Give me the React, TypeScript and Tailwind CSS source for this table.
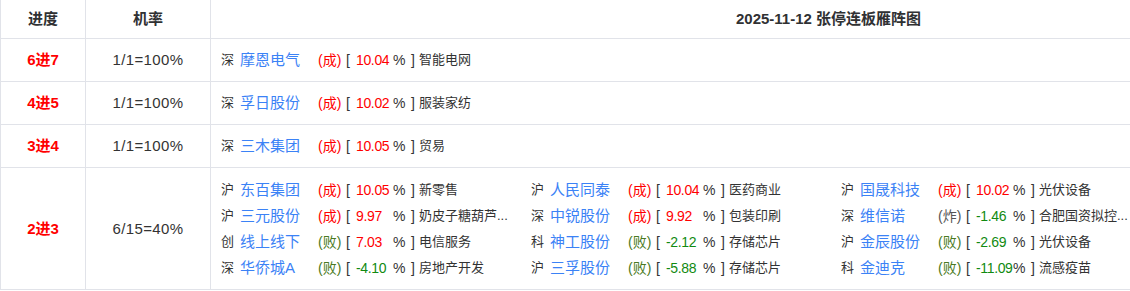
import React from 'react';

type Stock = {
  mkt: string;
  name: string;
  tag: '成' | '败' | '炸';
  pct: string;
  ind: string;
};

type Row = { level: string; rate: string; stocks: Stock[] };

const ROWS: Row[] = [
  { level: '6进7', rate: '1/1=100%', stocks: [{ mkt: '深', name: '摩恩电气', tag: '成', pct: '10.04', ind: '智能电网' }] },
  { level: '4进5', rate: '1/1=100%', stocks: [{ mkt: '深', name: '孚日股份', tag: '成', pct: '10.02', ind: '服装家纺' }] },
  { level: '3进4', rate: '1/1=100%', stocks: [{ mkt: '深', name: '三木集团', tag: '成', pct: '10.05', ind: '贸易' }] },
  {
    level: '2进3',
    rate: '6/15=40%',
    stocks: [
      { mkt: '沪', name: '东百集团', tag: '成', pct: '10.05', ind: '新零售' },
      { mkt: '沪', name: '人民同泰', tag: '成', pct: '10.04', ind: '医药商业' },
      { mkt: '沪', name: '国晟科技', tag: '成', pct: '10.02', ind: '光伏设备' },
      { mkt: '沪', name: '三元股份', tag: '成', pct: '9.97', ind: '奶皮子糖葫芦...' },
      { mkt: '深', name: '中锐股份', tag: '成', pct: '9.92', ind: '包装印刷' },
      { mkt: '深', name: '维信诺', tag: '炸', pct: '-1.46', ind: '合肥国资拟控...' },
      { mkt: '创', name: '线上线下', tag: '败', pct: '7.03', ind: '电信服务' },
      { mkt: '科', name: '神工股份', tag: '败', pct: '-2.12', ind: '存储芯片' },
      { mkt: '沪', name: '金辰股份', tag: '败', pct: '-2.69', ind: '光伏设备' },
      { mkt: '深', name: '华侨城A', tag: '败', pct: '-4.10', ind: '房地产开发' },
      { mkt: '沪', name: '三孚股份', tag: '败', pct: '-5.88', ind: '存储芯片' },
      { mkt: '科', name: '金迪克', tag: '败', pct: '-11.09', ind: '流感疫苗' },
    ],
  },
];

const tagColor = { 成: 'text-[#ff0000]', 败: 'text-[#4a7a22]', 炸: 'text-[#555555]' };

const StockItem = ({ s }: { s: Stock }) => (
  <div className="flex w-[310px] items-center h-[26px] whitespace-nowrap text-[#333]">
    <span className="w-[19px] text-[13px]">{s.mkt}</span>
    <span className="w-[78px] text-[15px] text-[#3b82f6]">{s.name}</span>
    <span className={`w-[28px] text-[14px] ${tagColor[s.tag]}`}>({s.tag})</span>
    <span className="w-[10px] text-[14px]">[</span>
    <span className={`w-[37px] text-[14px] tracking-tight ${s.pct.startsWith('-') ? 'text-[#118a11]' : 'text-[#ff0000]'}`}>{s.pct}</span>
    <span className="w-[18px] text-[14px]">%</span>
    <span className="w-[8px] text-[14px]">]</span>
    <span className="text-[13px]">{s.ind}</span>
  </div>
);

export default function App() {
  const cell = 'border-r border-b border-[#e1e3e9] flex items-center justify-center';
  return (
    <div className="w-[1130px] h-[291px] overflow-hidden bg-white font-[family-name:Liberation_Sans,Noto_Sans_CJK_SC,sans-serif] leading-[26px]">
      <div className="grid w-[1446px] grid-cols-[85px_125px_1236px] border-l border-[#e1e3e9]">
        <div className={`${cell} h-[39px] font-bold text-[15px] text-[#303133]`}>进度</div>
        <div className={`${cell} h-[39px] font-bold text-[15px] text-[#303133]`}>机率</div>
        <div className={`${cell} h-[39px] font-bold text-[15px] text-[#303133]`}>2025-11-12 张停连板雁阵图</div>

        {ROWS.map((row) => {
          const h = row.stocks.length > 1 ? 'h-[122px]' : 'h-[43px]';
          return (
            <React.Fragment key={row.level}>
              <div className={`${cell} ${h} font-bold text-[15px] text-[#ff0000]`}>{row.level}</div>
              <div className={`${cell} ${h} text-[15px] tracking-[0.4px] text-[#333]`}>{row.rate}</div>
              <div className={`border-r border-b border-[#e1e3e9] ${h} flex items-center pl-[10px]`}>
                <div className="flex flex-wrap w-[930px]">
                  {row.stocks.map((s) => (
                    <StockItem key={s.name} s={s} />
                  ))}
                </div>
              </div>
            </React.Fragment>
          );
        })}
      </div>
    </div>
  );
}
